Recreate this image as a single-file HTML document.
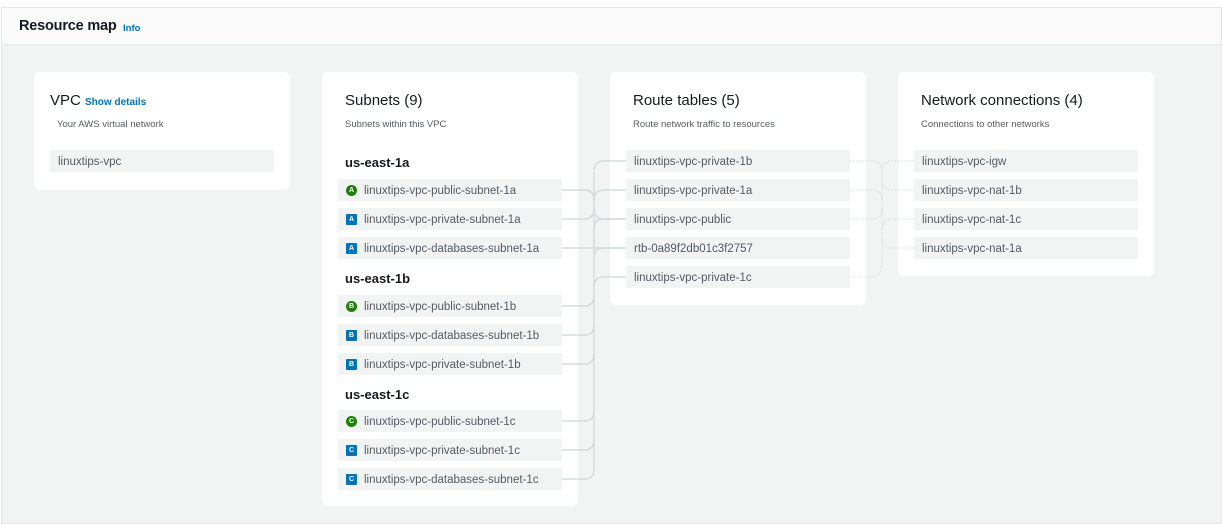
<!DOCTYPE html>
<html><head><meta charset="utf-8"><style>
*{box-sizing:border-box;margin:0;padding:0}
body{width:1222px;height:524px;background:#fff;font-family:"Liberation Sans",sans-serif;position:relative;overflow:hidden;color:#16191f}
.frame{position:absolute;left:1px;top:7px;width:1221px;height:517px;border:1px solid #e4e6e6;background:#f2f3f3}
.hdr{position:absolute;left:0;top:0;width:100%;height:37px;background:#fafafa;border-bottom:1px solid #e9ebeb}
.hdr h1{position:absolute;left:17px;top:10px;font-size:14.5px;font-weight:bold;letter-spacing:-0.2px}
.hdr a{position:absolute;left:121px;top:15px;font-size:9.5px;font-weight:bold;color:#0073bb}
.card{position:absolute;background:#fff;border-radius:6px}
.t{position:absolute;left:16px;top:20px;font-size:15px}
.s{position:absolute;left:23px;top:47px;font-size:9.5px;color:#545b64}
.it{position:absolute;height:22px;background:#f2f3f3;font-size:11.5px;color:#545b64;line-height:24px;padding-left:8px;width:224px}
.sub{padding-left:26px}
.rg{position:absolute;left:23px;font-size:13px;font-weight:bold}
.ic{position:absolute;left:8px;top:6px;width:11px;height:11px;color:#fff;font-size:7px;line-height:11px;text-align:center;font-weight:bold}
.g{background:#1d8102;border-radius:50%}
.b{background:#0073bb;border-radius:1px}
svg{position:absolute;left:0;top:0}
</style></head><body>
<div class="frame">
<div class="hdr"><h1>Resource map</h1><a>Info</a></div>
</div>
<div class="card" style="left:34px;top:72px;width:256px;height:118px">
<div class="t">VPC <span style="font-size:10px;font-weight:bold;color:#0073bb">Show details</span></div>
<div class="s">Your AWS virtual network</div>
<div class="it" style="left:16px;top:78px">linuxtips-vpc</div>
</div>
<div class="card" style="left:322px;top:72px;width:256px;height:434px">
<div class="t" style="left:23px">Subnets (9)</div>
<div class="s">Subnets within this VPC</div>
<div class="rg" style="top:83px">us-east-1a</div>
<div class="it sub" style="left:16px;top:107px"><span class="ic g">A</span>linuxtips-vpc-public-subnet-1a</div>
<div class="it sub" style="left:16px;top:136px"><span class="ic b">A</span>linuxtips-vpc-private-subnet-1a</div>
<div class="it sub" style="left:16px;top:165px"><span class="ic b">A</span>linuxtips-vpc-databases-subnet-1a</div>
<div class="rg" style="top:199px">us-east-1b</div>
<div class="it sub" style="left:16px;top:223px"><span class="ic g">B</span>linuxtips-vpc-public-subnet-1b</div>
<div class="it sub" style="left:16px;top:252px"><span class="ic b">B</span>linuxtips-vpc-databases-subnet-1b</div>
<div class="it sub" style="left:16px;top:281px"><span class="ic b">B</span>linuxtips-vpc-private-subnet-1b</div>
<div class="rg" style="top:315px">us-east-1c</div>
<div class="it sub" style="left:16px;top:338px"><span class="ic g">C</span>linuxtips-vpc-public-subnet-1c</div>
<div class="it sub" style="left:16px;top:367px"><span class="ic b">C</span>linuxtips-vpc-private-subnet-1c</div>
<div class="it sub" style="left:16px;top:396px"><span class="ic b">C</span>linuxtips-vpc-databases-subnet-1c</div>
</div>
<div class="card" style="left:610px;top:72px;width:256px;height:233px">
<div class="t" style="left:23px">Route tables (5)</div>
<div class="s">Route network traffic to resources</div>
<div class="it" style="left:16px;top:78px">linuxtips-vpc-private-1b</div>
<div class="it" style="left:16px;top:107px">linuxtips-vpc-private-1a</div>
<div class="it" style="left:16px;top:136px">linuxtips-vpc-public</div>
<div class="it" style="left:16px;top:165px">rtb-0a89f2db01c3f2757</div>
<div class="it" style="left:16px;top:194px">linuxtips-vpc-private-1c</div>
</div>
<div class="card" style="left:898px;top:72px;width:256px;height:204px">
<div class="t" style="left:23px">Network connections (4)</div>
<div class="s">Connections to other networks</div>
<div class="it" style="left:16px;top:78px">linuxtips-vpc-igw</div>
<div class="it" style="left:16px;top:107px">linuxtips-vpc-nat-1b</div>
<div class="it" style="left:16px;top:136px">linuxtips-vpc-nat-1c</div>
<div class="it" style="left:16px;top:165px">linuxtips-vpc-nat-1a</div>
</div>
<svg width="1222" height="524" fill="none">
<g stroke="#d5dbdb" stroke-width="1.5">
<path d="M594 172V470"/>
<path d="M562 190H584Q594 190 594 200"/>
<path d="M562 219H584Q594 219 594 209"/>
<path d="M562 248H626"/>
<path d="M562 306H584Q594 306 594 296"/>
<path d="M562 335H584Q594 335 594 325"/>
<path d="M562 364H584Q594 364 594 354"/>
<path d="M562 421H584Q594 421 594 411"/>
<path d="M562 450H584Q594 450 594 440"/>
<path d="M562 479H584Q594 479 594 469"/>
<path d="M626 161H604Q594 161 594 171"/>
<path d="M626 190H604Q594 190 594 200"/>
<path d="M626 219H604Q594 219 594 209"/>
<path d="M626 219H604Q594 219 594 229"/>
<path d="M626 248H604Q594 248 594 258"/>
<path d="M626 277H604Q594 277 594 287"/>
</g>
<g stroke="#d5dbdb" stroke-width="1" stroke-dasharray="1.5 1.5">
<path d="M850 161H872Q882 161 882 171V262Q882 277 872 277H850"/>
<path d="M850 190H872Q882 190 882 200"/>
<path d="M850 219H872Q882 219 882 209"/>
<path d="M914 161H892Q882 161 882 171"/>
<path d="M914 190H892Q882 190 882 180"/>
<path d="M914 219H892Q882 219 882 229"/>
<path d="M914 248H892Q882 248 882 238"/>
</g>
</svg>
</body></html>
